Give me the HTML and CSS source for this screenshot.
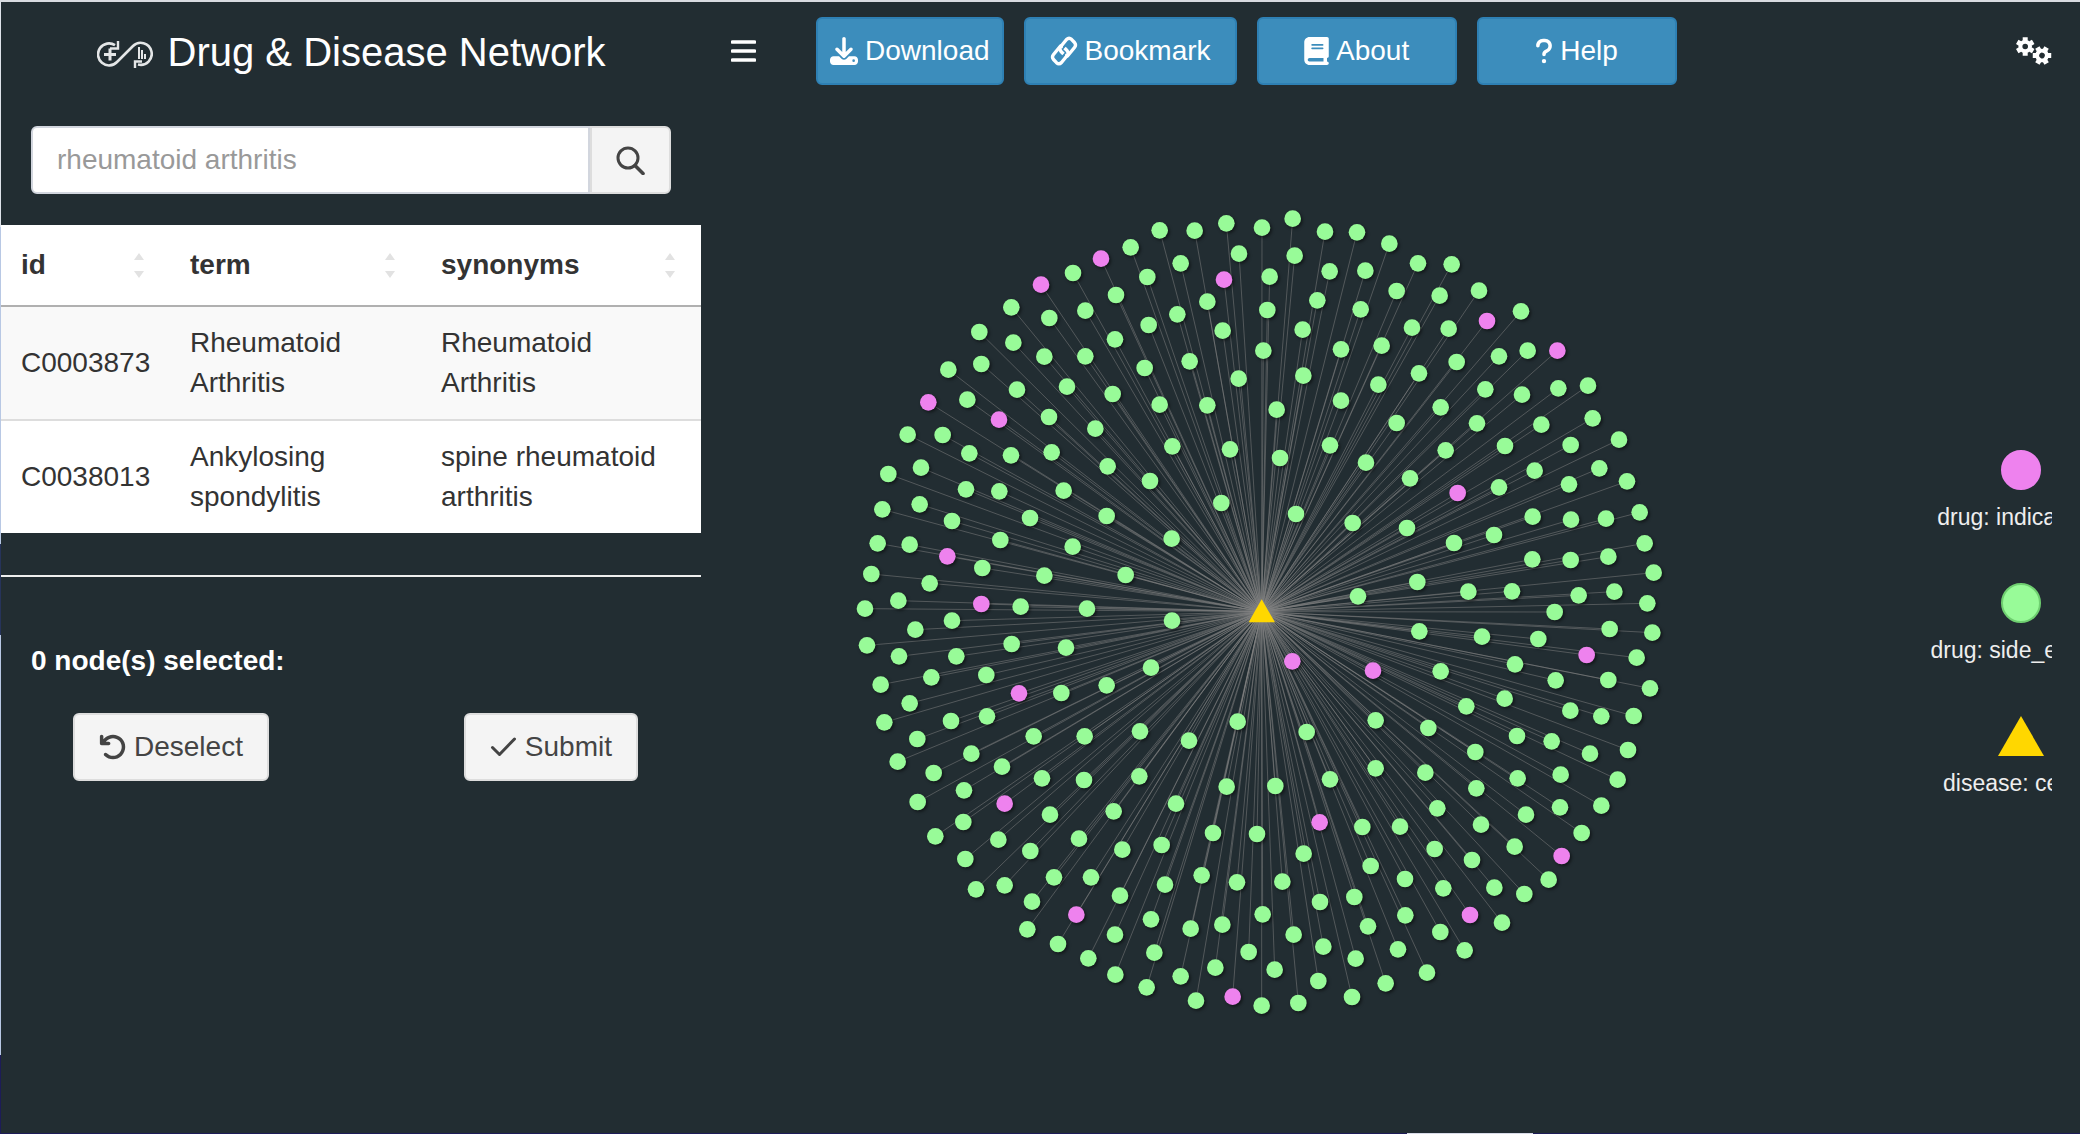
FILE: index.html
```html
<!DOCTYPE html>
<html lang="en">
<head>
<meta charset="utf-8">
<meta name="viewport" content="width=device-width, initial-scale=1">
<title>Drug &amp; Disease Network</title>
<link rel="stylesheet" href="styles.css">
</head>
<body>
<div class="app">
  <aside class="sidebar">
    <h1 class="brand">
      <svg class="brand-logo" viewBox="0 0 56 28" aria-hidden="true">
        <path d="M18 5.200A11 11 0 1 0 20 22L36 6A11 11 0 1 1 41 24.500" fill="none" stroke="currentColor" stroke-width="2.600"/>
        <path d="M21 1v7.500h-8M38 28v-6.500h7" fill="none" stroke="currentColor" stroke-width="2.400"/>
        <path d="M13 8.500v12M7 14.500h12" fill="none" stroke="currentColor" stroke-width="3"/>
        <path d="M42 7v12M45 10v9M48 14v5" fill="none" stroke="currentColor" stroke-width="2"/>
      </svg>
      <span>Drug &amp; Disease Network</span>
    </h1>

    <form class="search">
      <input class="search-input" type="text" aria-label="Search terms" placeholder="rheumatoid arthritis">
      <button class="search-button" type="button" aria-label="Search">
        <svg class="icon-search" viewBox="0 0 29 29" aria-hidden="true"><circle cx="12" cy="12" r="10" fill="none" stroke="currentColor" stroke-width="3"/><path d="M19 19.500L27 27.500" stroke="currentColor" stroke-width="3.600" stroke-linecap="round"/></svg>
      </button>
    </form>

    <table class="terms">
      <colgroup><col class="col-id"><col class="col-term"><col></colgroup>
      <thead>
        <tr>
          <th scope="col"><span class="th-inner">id<span class="sort"></span></span></th>
          <th scope="col"><span class="th-inner">term<span class="sort"></span></span></th>
          <th scope="col"><span class="th-inner">synonyms<span class="sort"></span></span></th>
        </tr>
      </thead>
      <tbody>
        <tr><td>C0003873</td><td>Rheumatoid Arthritis</td><td>Rheumatoid Arthritis</td></tr>
        <tr><td>C0038013</td><td>Ankylosing spondylitis</td><td>spine rheumatoid arthritis</td></tr>
      </tbody>
    </table>

    <hr class="divider">

    <section class="selection">
      <h2 class="selection-title">0 node(s) selected:</h2>
      <div class="selection-actions">
        <button class="btn btn-default" type="button">
          <svg class="icon" viewBox="0 0 512 512" aria-hidden="true"><path d="M125.700 160H176c17.700 0 32 14.300 32 32s-14.300 32-32 32H48c-17.700 0-32-14.300-32-32V64c0-17.700 14.300-32 32-32s32 14.300 32 32v51.200L97.600 97.600c87.500-87.500 229.300-87.500 316.800 0s87.500 229.300 0 316.800s-229.300 87.500-316.800 0c-12.500-12.500-12.500-32.800 0-45.300s32.800-12.500 45.300 0c62.500 62.500 163.800 62.500 226.300 0s62.500-163.800 0-226.300s-163.800-62.500-226.300 0L125.700 160z"/></svg>
          Deselect
        </button>
        <button class="btn btn-default" type="button">
          <svg class="icon" viewBox="0 0 28 28" aria-hidden="true"><path d="M2.500 14.500L9.500 21.500L24.500 6" fill="none" stroke="currentColor" stroke-width="3" stroke-linecap="round" stroke-linejoin="round"/></svg>
          Submit
        </button>
      </div>
    </section>
  </aside>

  <div class="page">
    <header class="topbar">
      <button class="plain menu-toggle" type="button" aria-label="Toggle sidebar">
        <svg class="icon-menu" viewBox="0 0 25 22" aria-hidden="true"><path d="M1.500 2h22M1.500 11h22M1.500 20h22" fill="none" stroke="currentColor" stroke-width="3.600" stroke-linecap="round"/></svg>
      </button>
      <nav class="actions">
        <button class="btn btn-primary btn-tight" type="button">
          <svg class="icon" viewBox="0 0 512 512" aria-hidden="true"><path d="M288 32c0-17.700-14.300-32-32-32s-32 14.300-32 32V274.700l-73.400-73.400c-12.500-12.500-32.800-12.500-45.300 0s-12.500 32.800 0 45.300l128 128c12.500 12.500 32.800 12.500 45.300 0l128-128c12.500-12.500 12.500-32.800 0-45.300s-32.800-12.500-45.300 0L288 274.700V32zM64 352c-35.300 0-64 28.700-64 64v32c0 35.300 28.700 64 64 64H448c35.300 0 64-28.700 64-64V416c0-35.300-28.700-64-64-64H346.500l-45.300 45.300c-25 25-65.500 25-90.500 0L165.500 352H64zm368 56a24 24 0 1 1 0 48 24 24 0 1 1 0-48z"/></svg>
          Download
        </button>
        <button class="btn btn-primary" type="button">
          <svg class="icon icon-link" viewBox="0 0 26 30" aria-hidden="true"><g fill="none" stroke="currentColor" stroke-width="3.400" stroke-linejoin="round"><path id="link-half" d="M14 19.500L16.500 20L23.500 11.500Q25.500 9 23.500 6.500L20.500 3.300Q18 1 15.500 3.500L9.800 10.500Q8 13 10 15.500L12.500 18"/><use href="#link-half" transform="rotate(180 13 15)"/></g></svg>
          Bookmark
        </button>
        <button class="btn btn-primary btn-wide" type="button">
          <svg class="icon icon-book" viewBox="0 0 448 512" aria-hidden="true"><path d="M96 0C43 0 0 43 0 96V416c0 53 43 96 96 96H384h32c17.700 0 32-14.300 32-32s-14.300-32-32-32V384c17.700 0 32-14.300 32-32V32c0-17.700-14.300-32-32-32H384 96zm0 384H352v64H96c-17.700 0-32-14.300-32-32s14.300-32 32-32zm32-240c0-8.800 7.200-16 16-16H336c8.800 0 16 7.200 16 16s-7.200 16-16 16H144c-8.800 0-16-7.200-16-16zm16 48H336c8.800 0 16 7.200 16 16s-7.200 16-16 16H144c-8.800 0-16-7.200-16-16s7.200-16 16-16z"/></svg>
          About
        </button>
        <button class="btn btn-primary btn-wide" type="button">
          <svg class="icon icon-question" viewBox="0 0 320 512" aria-hidden="true"><path d="M80 160c0-35.300 28.700-64 64-64h32c35.300 0 64 28.700 64 64v3.600c0 21.800-11.100 42.100-29.400 53.800l-42.200 27.100c-25.200 16.200-40.400 44.100-40.400 74V320c0 17.700 14.300 32 32 32s32-14.300 32-32v-1.400c0-8.200 4.200-15.800 11-20.200l42.200-27.100c36.600-23.600 58.800-64.100 58.800-107.700V160c0-70.700-57.300-128-128-128H144C73.300 32 16 89.300 16 160c0 17.700 14.300 32 32 32s32-14.300 32-32zm80 320a40 40 0 1 0 0-80 40 40 0 1 0 0 80z"/></svg>
          Help
        </button>
      </nav>
      <button class="plain settings" type="button" aria-label="Settings">
        <svg class="icon-gears" viewBox="0 0 36 28" aria-hidden="true">
          <defs>
            <g id="gear">
              <circle r="4.800" fill="none" stroke="currentColor" stroke-width="4"/>
              <path d="M0-9.200V-6M0 9.200V6M8-4.600L5.200-3M-8 4.600L-5.200 3M-8-4.600L-5.200-3M8 4.600L5.200 3" stroke="currentColor" stroke-width="5" stroke-linejoin="round"/>
            </g>
          </defs>
          <use href="#gear" transform="translate(9.200 9.500)"/>
          <use href="#gear" transform="translate(26 18.500) rotate(30)"/>
        </svg>
      </button>
    </header>

    <main class="graph">
      <svg class="network" id="network" viewBox="-447 -264 3363 3093" role="img" aria-label="Network of drugs linked to the selected disease">
        <g id="edges" class="edges"></g>
        <g id="nodes" class="nodes"></g>
        <path class="center" d="M1235 1228L1275 1297H1196Z"/>
      </svg>
      <ul class="legend">
        <li class="legend-item"><span class="dot dot-indication"></span><span class="legend-label">drug: indications</span></li>
        <li class="legend-item"><span class="dot dot-side-effect"></span><span class="legend-label">drug: side_effects</span></li>
        <li class="legend-item"><svg class="legend-triangle" viewBox="0 0 46 40" aria-hidden="true"><path d="M23 0L46 40H0Z"/></svg><span class="legend-label">disease: center</span></li>
      </ul>
    </main>
  </div>
</div>
<script src="network.js"></script>
</body>
</html>
```
FILE: styles.css
```css
* {
  box-sizing: border-box;
}

:root {
  --bg: #222d32;
  --primary: #3c8dbc;
  --primary-border: #2e80b4;
  --text: #333;
}

body {
  margin: 0;
  background: var(--bg);
  color: #fff;
  font-family: "Liberation Sans", Arial, sans-serif;
  font-size: 28px;
  line-height: 40px;
}

button,
input {
  font: inherit;
}

svg {
  display: block;
  flex: none;
  fill: currentColor;
}

.app {
  display: flex;
  min-height: 100vh;
  padding: 2px 0 1px 1px;
  background:
    linear-gradient(#d8dbe0, #d8dbe0) top / 100% 2px no-repeat,
    linear-gradient(#d8dbe8, #d8dbe8) 72% 100% / 126px 1px no-repeat,
    linear-gradient(#1d1c57, #1d1c57) bottom / 100% 1px no-repeat,
    linear-gradient(#dfe3ea 0 20%, #b8c8e4 20% 48%, #26335a 48% 56%, #b8c8e4 56% 93%, #1d1c57 93%) left / 1px 100% no-repeat,
    var(--bg);
}

/* Sidebar */

.sidebar {
  flex: none;
  width: 700px;
}

.brand {
  display: flex;
  align-items: center;
  justify-content: center;
  gap: 15px;
  height: 100px;
  margin: 0;
  font-size: 40px;
  font-weight: 400;
}

.brand-logo {
  width: 56px;
  height: 28px;
  color: #e4e6e7;
  margin-top: 4px;
}

.search {
  display: flex;
  padding: 24px 30px 31px;
}

.search-input {
  flex: 1;
  min-width: 0;
  height: 68px;
  padding: 0 24px;
  border: 2px solid #d2d6de;
  border-radius: 6px 0 0 6px;
  background: #fff;
  color: #555;
}

.search-input::placeholder {
  color: #999;
  opacity: 1;
}

.search-button {
  display: flex;
  align-items: center;
  justify-content: center;
  width: 81px;
  height: 68px;
  padding: 0;
  border: 2px solid #ddd;
  border-radius: 0 6px 6px 0;
  background: #f4f4f4;
  color: #444;
}

.icon-search {
  width: 29px;
  height: 29px;
}

.terms {
  width: 100%;
  table-layout: fixed;
  border-collapse: separate;
  border-spacing: 0;
  background: #fff;
  color: var(--text);
}

.col-id {
  width: 169px;
}

.col-term {
  width: 251px;
}

.terms th {
  padding: 20px 26px 20px 20px;
  border-bottom: 2px solid #b0b0b0;
  text-align: left;
}

.terms td {
  padding: 16px 20px;
  vertical-align: middle;
}

.terms tbody tr:nth-child(odd) td {
  background: #f9f9f9;
}

.terms tbody tr + tr td {
  border-top: 2px solid #ddd;
}

.terms td:first-child {
  padding-right: 0;
}

.th-inner {
  display: flex;
  align-items: center;
  justify-content: space-between;
}

.sort::before,
.sort::after {
  content: "";
  display: block;
  border: 5px solid transparent;
}

.sort::before {
  border-top: 0;
  border-bottom: 7px solid #e2e2e2;
}

.sort::after {
  margin-top: 11px;
  border-bottom: 0;
  border-top: 7px solid #e2e2e2;
}

.divider {
  height: 2px;
  margin: 42px 0 64px;
  border: 0;
  background: #eee;
}

.selection {
  padding: 0 63px 0 30px;
}

.selection-title {
  margin: 0 0 32px;
  font-size: 28px;
  font-weight: 700;
}

.selection-actions {
  display: flex;
  justify-content: space-between;
  padding-left: 42px;
}

/* Buttons */

.btn {
  display: flex;
  align-items: center;
  justify-content: center;
  gap: 7px;
  height: 68px;
  padding: 0 24px;
  border: 2px solid;
  border-radius: 6px;
  white-space: nowrap;
}

.btn-default {
  border-color: #ddd;
  background: #f4f4f4;
  color: #444;
}

.btn-primary {
  border-color: var(--primary-border);
  background: var(--primary);
  color: #fff;
}

.btn-tight {
  padding: 0 12px;
}

.btn-wide {
  min-width: 200px;
}

.icon {
  width: 28px;
  height: 28px;
}

.icon-link {
  height: 30px;
}

.icon-book {
  width: 25px;
}

.icon-question {
  width: 18px;
}

.plain {
  padding: 0;
  border: 0;
  background: none;
  color: #fff;
}

/* Main column */

.page {
  flex: 1;
  min-width: 0;
}

.topbar {
  display: flex;
  align-items: center;
  height: 100px;
  padding: 0 28px 2px 30px;
}

.actions {
  display: flex;
  gap: 20px;
  margin-left: 60px;
}

.icon-menu {
  width: 25px;
  height: 22px;
}

.icon-gears {
  width: 36px;
  height: 28px;
}

.settings {
  margin-left: auto;
}

.graph {
  display: flex;
  padding-right: 28px;
}

.network {
  flex: 1;
  min-width: 0;
  height: auto;
}

.edges {
  stroke: #848484;
  stroke-opacity: 0.5;
  stroke-width: 3;
}

.nodes {
  filter: drop-shadow(5px 5px 5px rgba(0, 0, 0, 0.5));
}

.side-effect {
  fill: #98fb98;
}

.indication {
  fill: #ee82ee;
}

.center {
  fill: #ffd700;
}

/* Legend */

.legend {
  display: flex;
  flex: none;
  flex-direction: column;
  justify-content: center;
  gap: 52px;
  width: 230px;
  margin: 0;
  padding: 12px 0 0 168px;
  overflow: hidden;
  list-style: none;
}

.legend-item {
  display: flex;
  flex-direction: column;
  align-items: center;
  gap: 14px;
}

.legend-label {
  color: #eee;
  font-size: 23px;
  line-height: 27px;
  white-space: nowrap;
}

.dot {
  width: 40px;
  height: 40px;
  border: 2px solid;
  border-radius: 50%;
}

.dot-indication {
  border-color: #ee82ee;
  background: #ee82ee;
}

.dot-side-effect {
  border-color: #6fcf70;
  background: #98fb98;
}

.legend-triangle {
  width: 46px;
  height: 40px;
  fill: #ffd700;
}
```
FILE: network.js
```js
// Node positions by quadrant: an origin, then the "x,y" pairs of each kind.
const CENTER = [1235, 1265];
const QUADRANTS = [
  {
    origin: [0, 0],
    sideEffect: `929,121 1034,122 1129,100 1236,113 842,172 1167,191 992,220 892,261 669,249 1072,335
      798,315 1118,422 982,373 706,362 896,405 484,352 598,384 795,448 388,426 490,458 583,500 706,499
      884,534 1019,514 1166,566 295,539 394,522 501,599 651,590 788,612 929,644 1072,646 352,629 597,681
      736,716 967,769 1140,778 173,734 278,735 358,790 483,796 605,787 773,829 900,873 115,852 213,833
      348,898 448,904 641,902 1114,939 97,958 209,943 306,993 540,984 770,978 965,1046 83,1060 179,1064
      451,1050 668,1070 397,1134 583,1157 827,1155 64,1152 239,1180 145,1232`,
    indication: "753,206 573,284 1122,269 235,637 447,689 292,1099"
  },
  {
    origin: [1200, 0],
    sideEffect: `128,86 225,125 321,127 418,161 504,220 605,223 687,302 134,197 239,244 346,242 440,303
      569,317 813,364 59,260 202,331 332,358 486,413 596,416 747,499 833,482 52,360 158,419 273,478
      395,467 507,550 620,516 1014,587 925,595 816,614 706,598 40,482 160,557 385,584 572,652 273,632
      80,659 440,699 681,700 874,704 1028,685 240,766 90,804 587,781 765,768 962,765 1107,749 348,818
      480,865 854,842 1048,835 747,892 957,883 1131,874 138,972 308,999 471,1014 612,1059 732,1035
      848,980 963,989 1068,986 1169,967 1184,1060 1075,1100 962,1110 847,1108 1211,1148 502,1176
      324,1219 655,1205 786,1204 986,1216 1093,1205 1192,1240`,
    indication: "711,393 922,482 623,909"
  },
  {
    origin: [0, 1230],
    sideEffect: `512,20 711,26 45,26 966,62 306,62 196,89 51,136 485,132 648,143 147,169 319,169 903,203
      92,254 244,232 409,225 770,256 634,279 179,310 103,367 303,363 411,349 202,417 551,409 704,409
      870,394 1163,365 1017,422 143,485 364,461 251,519 456,500 342,571 576,535 702,540 868,529 1130,560
      203,606 340,666 256,709 600,644 791,634 978,611 445,719 687,716 935,735 1089,699 1221,702 346,777
      541,753 817,749 378,868 464,856 612,832 723,832 945,854 1055,826 1161,847 546,905 810,887 532,988
      903,958 1022,986 1117,974 1238,943 624,1032 795,1004 913,1058 715,1075 1196,1056 796,1124 992,1129
      1096,1103 890,1162 1038,1202 1235,1217`,
    indication: "394,12 507,280 464,611 679,944 1148,1190"
  },
  {
    origin: [1200, 1230],
    sideEffect: `914,36 508,94 696,110 865,117 1079,87 1207,98 1160,173 572,214 795,193 917,241 1075,240
      1200,265 649,319 764,296 961,332 1054,349 1151,348 377,361 535,384 801,408 905,424 1020,461
      1134,450 170,396 676,456 377,505 526,518 803,535 932,524 1103,539 240,538 76,558 679,565 562,625
      828,644 930,622 1054,617 995,699 337,681 450,680 693,674 554,747 794,740 161,761 362,798 465,837
      666,780 733,863 580,865 896,839 823,882 97,845 210,906 313,891 756,968 354,979 466,946 131,1004
      571,996 644,1051 220,1040 317,1076 444,1048 74,1109 205,1143 407,1150 531,1118 306,1191 145,1209`,
    indication: "127,184 369,212 1010,165 209,667 935,768 660,945"
  }
];

const SVG_NS = "http://www.w3.org/2000/svg";

function append(parent, name, attributes) {
  const element = document.createElementNS(SVG_NS, name);
  for (const [key, value] of Object.entries(attributes)) {
    element.setAttribute(key, value);
  }
  parent.appendChild(element);
}

function addNodes(pairs, origin, className) {
  const edges = document.getElementById("edges");
  const nodes = document.getElementById("nodes");
  for (const pair of pairs.trim().split(/\s+/)) {
    const [dx, dy] = pair.split(",").map(Number);
    const x = origin[0] + dx;
    const y = origin[1] + dy;
    append(edges, "line", { x1: CENTER[0], y1: CENTER[1], x2: x, y2: y });
    append(nodes, "circle", { cx: x, cy: y, r: 25, class: className });
  }
}

for (const quadrant of QUADRANTS) {
  addNodes(quadrant.sideEffect, quadrant.origin, "side-effect");
  addNodes(quadrant.indication, quadrant.origin, "indication");
}
```
